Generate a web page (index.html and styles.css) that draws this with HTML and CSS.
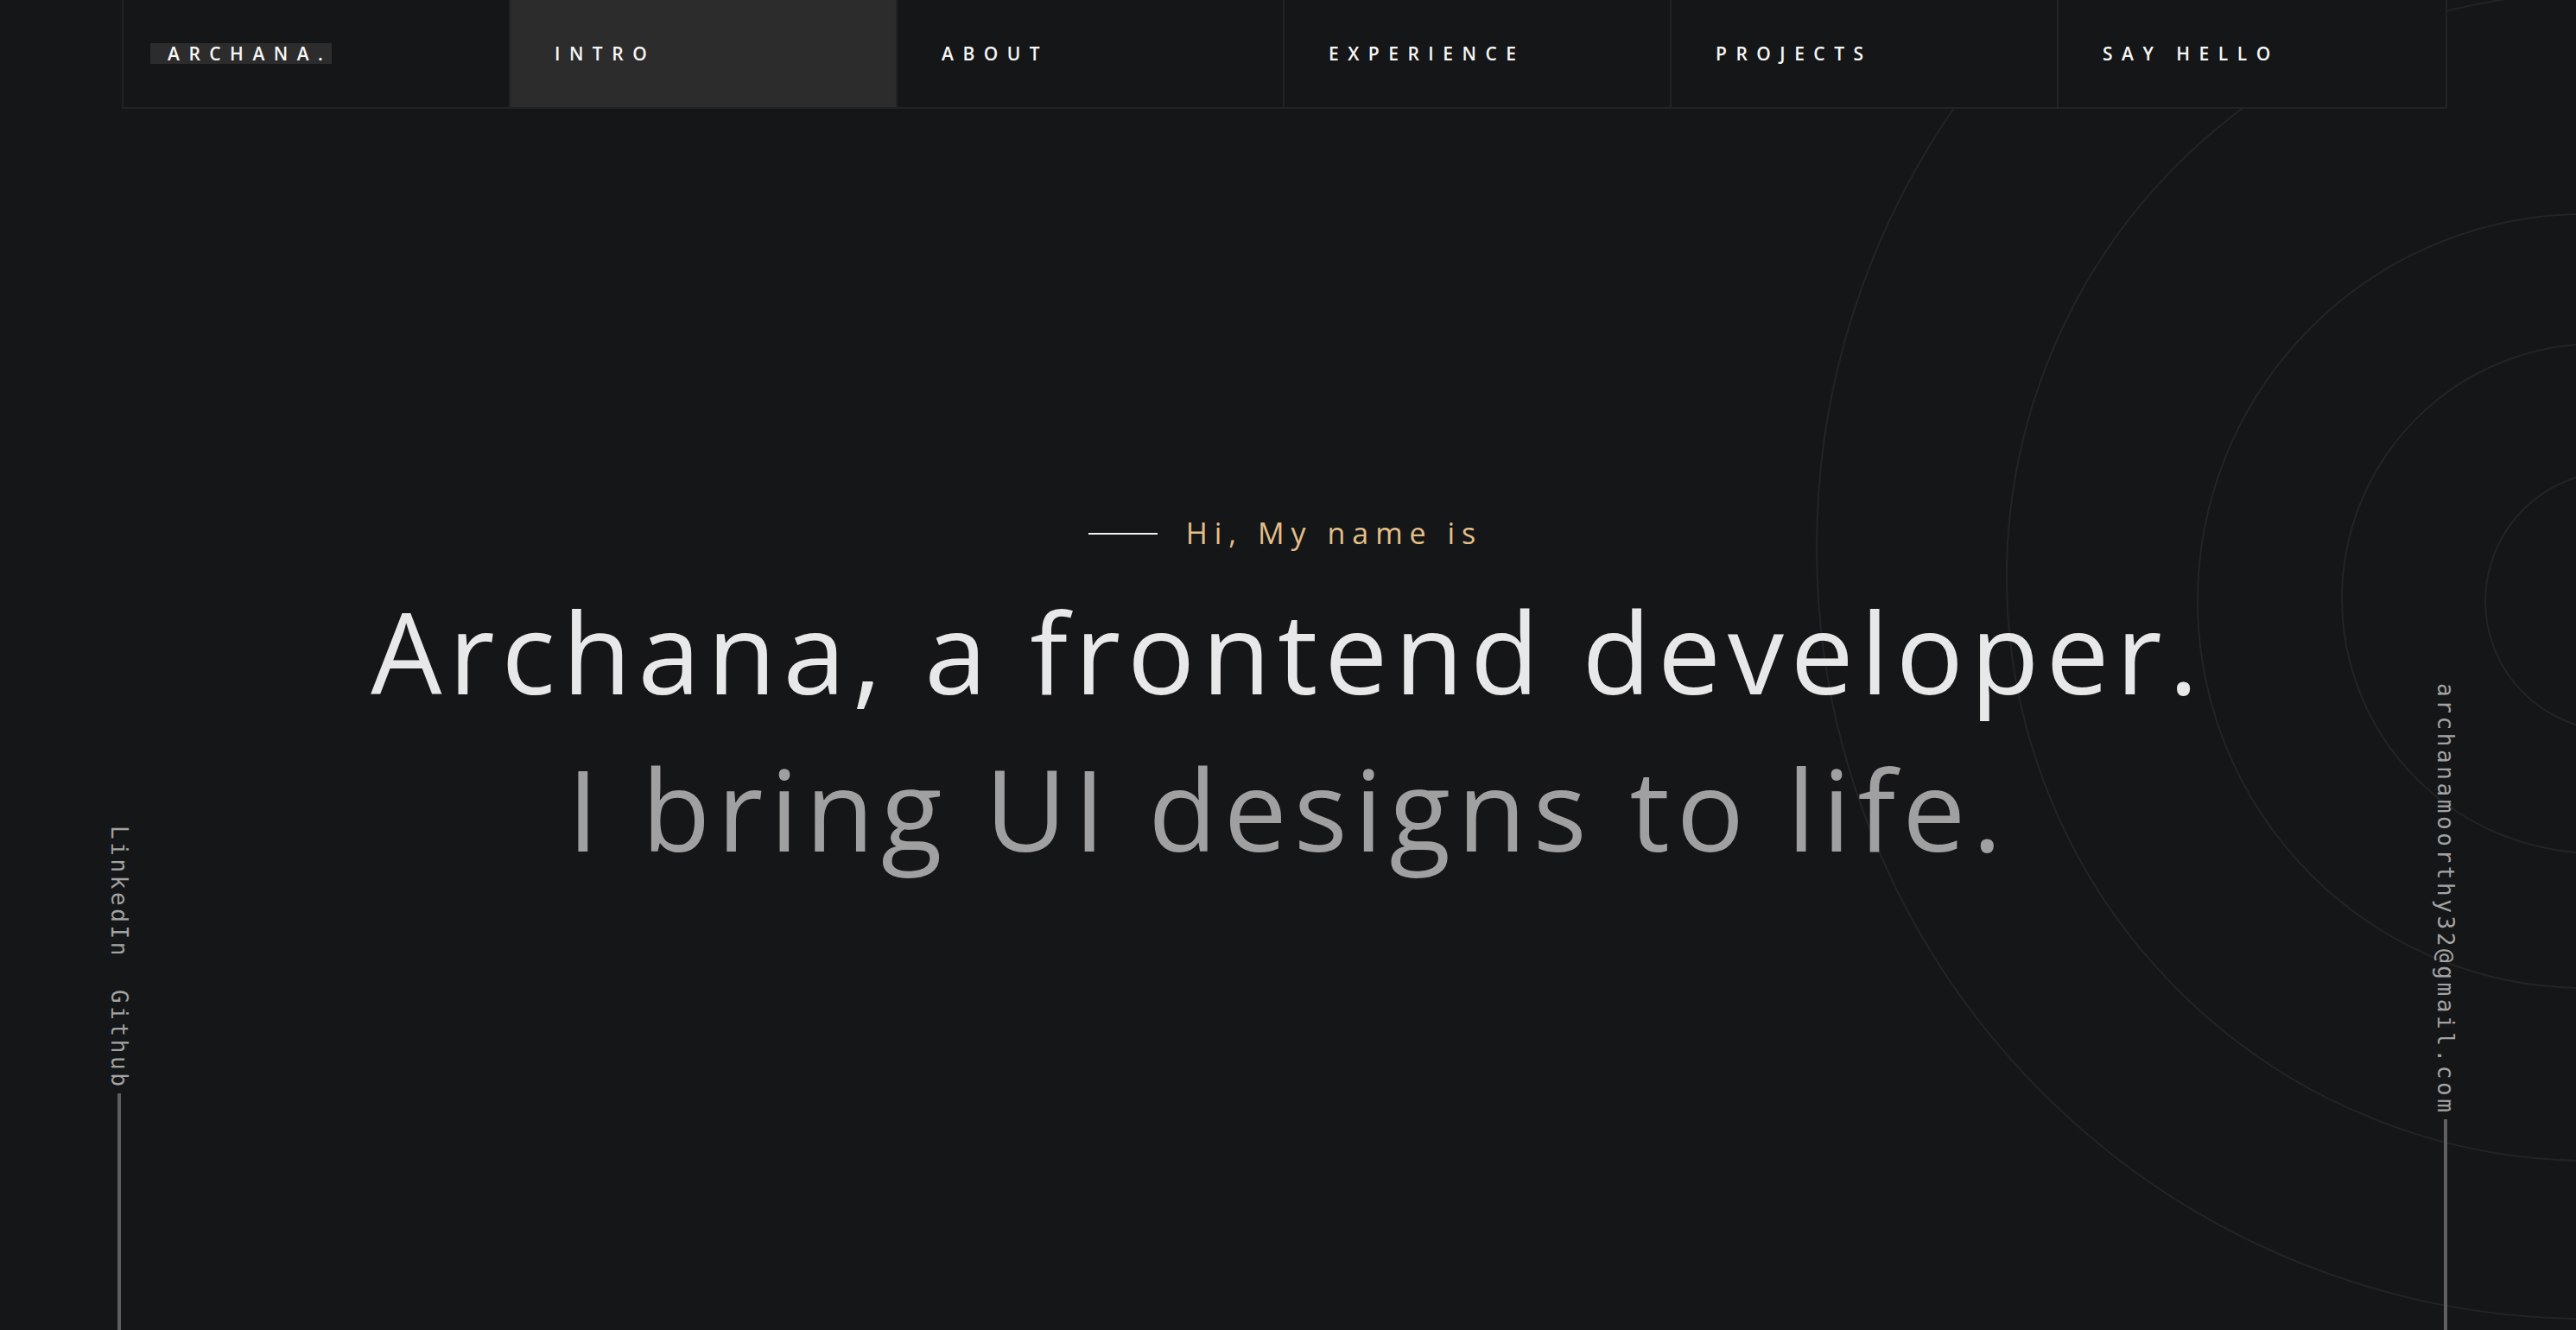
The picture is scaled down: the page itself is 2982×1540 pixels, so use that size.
FILE: index.html
```html
<!DOCTYPE html>
<html lang="en">
<head>
<meta charset="utf-8">
<title>Archana</title>
<link rel="stylesheet" href="styles.css">
</head>
<body>
<div class="page">
  <svg class="rings" width="2982" height="1540" viewBox="0 0 2982 1540" aria-hidden="true">
    <circle cx="3027" cy="696" r="150"/>
    <circle cx="3006" cy="693" r="295"/>
    <circle cx="2992" cy="696" r="448"/>
    <circle cx="2999" cy="668" r="676"/>
    <circle cx="2996" cy="634" r="893"/>
  </svg>

  <nav class="nav">
    <div class="nav-cell"><span class="logo">ARCHANA.</span></div>
    <a class="nav-cell active" href="#intro">INTRO</a>
    <a class="nav-cell" href="#about">ABOUT</a>
    <a class="nav-cell" href="#experience">EXPERIENCE</a>
    <a class="nav-cell" href="#projects">PROJECTS</a>
    <a class="nav-cell" href="#contact">SAY HELLO</a>
  </nav>

  <main class="hero" id="intro">
    <div class="greeting"><span class="dash"></span><span class="hi">Hi, My name is</span></div>
    <h1 class="title">
      <span class="line-main">Archana, a frontend developer.</span>
      <span class="line-sub">I bring UI designs to life.</span>
    </h1>
  </main>

  <aside class="side side-left">
    <div class="side-links">
      <a href="#">LinkedIn</a>
      <a href="#">Github</a>
    </div>
    <span class="side-line side-line-left"></span>
  </aside>

  <aside class="side side-right">
    <div class="side-links">
      <a href="#">archanamoorthy32@gmail.com</a>
    </div>
    <span class="side-line side-line-right"></span>
  </aside>
</div>
</body>
</html>
```
FILE: styles.css
```css
* { box-sizing: border-box; }

html, body {
  margin: 0;
  padding: 0;
  background: #151618;
}

body {
  width: 2982px;
  height: 1540px;
  overflow: hidden;
  font-family: "Open Sans", "Noto Sans", sans-serif;
  color: #e8e8e8;
}

a { color: inherit; text-decoration: none; }

.page {
  position: relative;
  width: 2982px;
  height: 1540px;
}

.rings {
  position: absolute;
  top: 0;
  left: 0;
  z-index: 0;
}

.rings circle {
  fill: none;
  stroke: #232428;
  stroke-width: 2;
}

/* NAV */
.nav {
  position: relative;
  z-index: 2;
  margin-left: 141px;
  width: 2692px;
  height: 126px;
  display: grid;
  grid-template-columns: repeat(6, 1fr);
  background: #151618;
  border: 2px solid #222327;
  border-top: none;
}

.nav-cell {
  display: flex;
  align-items: center;
  padding-left: 51px;
  border-right: 2px solid #222327;
  font-size: 21px;
  font-weight: 600;
  letter-spacing: 10.5px;
  color: #f6f6f6;
}

.nav-cell:last-child { border-right: none; }

.nav-cell:first-child { padding-left: 31px; }

.nav-cell.active { background: #2c2c2c; }

.logo {
  background: #2c2c2c;
  padding: 0 0 0 20px;
  line-height: 24px;
  height: 24px;
}

/* HERO */
.hero {
  position: relative;
  z-index: 1;
  padding-top: 466px;
  display: flex;
  flex-direction: column;
  align-items: center;
}

.greeting {
  display: flex;
  align-items: center;
  gap: 33px;
  height: 51px;
  margin-bottom: 20px;
  margin-right: 6px;
}

.dash {
  width: 80px;
  height: 2px;
  background: #f2f2f2;
}

.hi {
  font-size: 34px;
  font-weight: 500;
  line-height: 51px;
  letter-spacing: 8px;
  color: #e4bf88;
}

.title {
  margin: 0;
  font-weight: 500;
  font-size: 130px;
  line-height: 182px;
  letter-spacing: 8px;
  text-align: center;
  display: flex;
  flex-direction: column;
  align-items: center;
}

.line-main { color: #e8e8e8; }
.line-sub { color: #a0a0a0; }

/* SIDE BARS */
.side {
  position: absolute;
  bottom: 0;
  z-index: 1;
  display: flex;
  flex-direction: column;
  align-items: center;
  width: 40px;
}

.side-left { left: 118px; }
.side-right { left: 2811px; }

.side-links {
  writing-mode: vertical-rl;
  display: flex;
  gap: 36px;
  font-family: "DejaVu Sans Mono", "Liberation Mono", monospace;
  font-size: 26px;
  line-height: 30px;
  letter-spacing: 3.6px;
  color: #a3a3a3;
  margin-bottom: 4px;
}

.side-line {
  width: 4px;
  background: #5f5f5f;
}

.side-line-left { height: 274px; }
.side-line-right { height: 244px; }
```
